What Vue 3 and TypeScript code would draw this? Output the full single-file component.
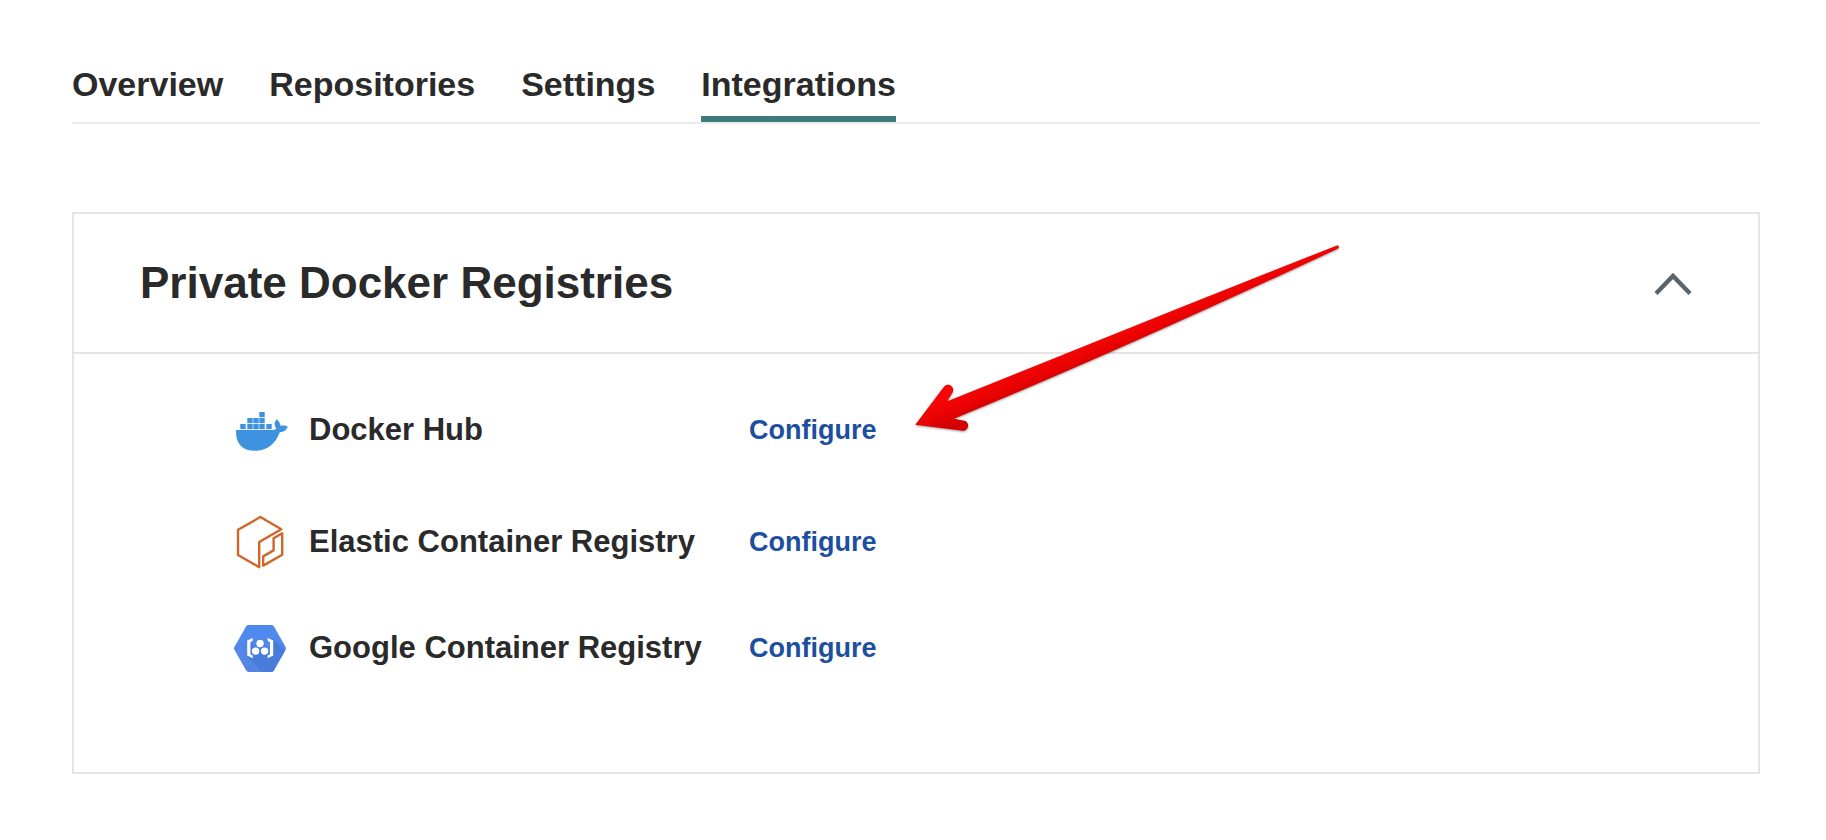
<script setup lang="ts">
import { ref } from 'vue'

const tabs: string[] = ['Overview', 'Repositories', 'Settings', 'Integrations']
const activeTab = ref('Integrations')
const open = ref(true)
const squares: [number, number][] = [
  [15, 24], [22, 24], [28, 24], [34, 24], [41, 24],
  [22, 18], [28, 18], [34, 18], [34, 12],
]
</script>

<template>
  <main class="page">
    <nav class="tabs" aria-label="Sections">
      <a
        v-for="tab in tabs"
        :key="tab"
        href="#"
        class="tab"
        :class="{ active: tab === activeTab }"
        @click.prevent="activeTab = tab"
      >{{ tab }}</a>
    </nav>

    <section class="card">
      <header class="card-header">
        <h2 id="registries-title">Private Docker Registries</h2>
        <button
          type="button"
          class="toggle"
          aria-labelledby="registries-title"
          :aria-expanded="open"
          @click="open = !open"
        >
          <svg width="38" height="26" viewBox="0 0 38 26">
            <path d="M2 23.500 19 6 36 23.500" fill="none" stroke="#5b636b" stroke-width="4.400" />
          </svg>
        </button>
      </header>

      <ul v-show="open" class="registries">
        <li class="row">
          <svg width="56" height="60" viewBox="7 0 56 60" aria-hidden="true">
            <g fill="#3e92e0">
              <rect v-for="([x, y], i) in squares" :key="i" :x="x + 0.3" :y="y" width="5.4" height="5.2" />
              <path d="M11.2 30H46.5C48.6 30 50.3 29.5 51.4 28.7 49.2 25.6 49 22.2 51.6 19.2 53.7 20.9 55.2 23 55.6 25.9 58 25.3 60.8 25.6 62.8 26.8 61.4 30.4 58.9 32.1 54.8 32.2 50.2 44 42.2 50.8 30.2 50.8 17.3 50.8 10.2 43.6 11.2 30Z" />
            </g>
          </svg>
          <span class="name">Docker Hub</span>
          <a href="#" class="configure" @click.prevent>Configure</a>
        </li>
        <li class="row">
          <svg width="56" height="60" viewBox="7 7 56 60" aria-hidden="true">
            <g fill="none" stroke="#cf672b" stroke-width="2.4" stroke-linejoin="round">
              <path d="M35.4 12 13 24.8V50L34.2 62.2V37L56.3 24.2Z" />
              <path d="M57.2 28.2V49.8L38.2 60.6V51.4L48.6 45.4V33.2Z" />
            </g>
          </svg>
          <span class="name">Elastic Container Registry</span>
          <a href="#" class="configure" @click.prevent>Configure</a>
        </li>
        <li class="row">
          <svg width="56" height="48" viewBox="7 14 56 48" aria-hidden="true">
            <defs>
              <linearGradient id="hex-blue" x1="0" y1="0" x2="0" y2="1">
                <stop offset="0" stop-color="#4f8af0" />
                <stop offset="1" stop-color="#5684e2" />
              </linearGradient>
              <clipPath id="hex-clip">
                <path d="M23.5 15H46.5Q48 15 48.8 16.3L60.6 36.9Q61.3 38.3 60.6 39.7L48.8 60.5Q48 61.9 46.5 61.9H23.5Q22 61.9 21.2 60.5L9.4 39.7Q8.7 38.3 9.4 36.9L21.2 16.3Q22 15 23.5 15Z" />
              </clipPath>
            </defs>
            <g clip-path="url(#hex-clip)">
              <path d="M8 14H62V63H8Z" fill="url(#hex-blue)" />
              <path d="M22.5 47.2 37.5 62.2H52L63 43.5 47 28 46 46 36.5 28.5 32 31.5 36 38 29 40 28 33 22.5 40Z" fill="#497bda" />
            </g>
            <g fill="#fff">
              <path d="M27.8 28V30.6L25.4 32.2V44.300L27.8 45.600V48.200L22.2 45.600V30.6Z" />
              <path d="M42.600 28V30.6L45 32.2V44.300L42.600 45.600V48.200L48.200 45.600V30.6Z" />
              <circle cx="35.1" cy="33.5" r="3.7" />
              <circle cx="30.6" cy="41.1" r="3.7" />
              <circle cx="39.6" cy="41.1" r="3.7" />
            </g>
          </svg>
          <span class="name">Google Container Registry</span>
          <a href="#" class="configure" @click.prevent>Configure</a>
        </li>
      </ul>

      <svg class="arrow" width="460" height="220" viewBox="0 0 460 220" aria-hidden="true">
        <defs>
          <linearGradient id="arrow-red" gradientUnits="userSpaceOnUse" x1="120" y1="140" x2="129" y2="162">
            <stop offset="0" stop-color="#f60505" />
            <stop offset="0.5" stop-color="#ea0202" />
            <stop offset="1" stop-color="#d20000" />
          </linearGradient>
        </defs>
        <path
          class="arrow-shape"
          d="M15.3 194.8 43.8 157C48 151.8 55.5 157 52.5 162.5L47.3 171.2 166.7 123.3 276.7 79 437 15.4Q438.6 15.2 438.900 16.8 438.900 18.3 437.6 18.8Q210 125 54 188.7L64.500 190.8C70.500 192.6 68.500 201 62.8 200.8Z"
          fill="url(#arrow-red)"
        />
      </svg>
    </section>
  </main>
</template>

<style>
body {
  margin: 0;
  background: #fff;
}
</style>

<style scoped>
.page {
  box-sizing: border-box;
  padding: 64px 66px 66px 72px;
  font-family: "Liberation Sans", Arial, Helvetica, sans-serif;
  font-weight: 700;
  color: #2a2a2a;
}

.tabs {
  display: flex;
  gap: 46px;
  border-bottom: 2px solid #ebebeb;
}

.tab {
  padding-bottom: 12px;
  border-bottom: 6px solid transparent;
  font-size: 34px;
  line-height: 40px;
  color: inherit;
  text-decoration: none;
}

.tab.active {
  border-bottom-color: #3f7b7a;
}

.card {
  position: relative;
  margin-top: 88px;
  border: 2px solid #e4e4e4;
}

.card-header {
  display: flex;
  align-items: center;
  justify-content: space-between;
  padding: 44px 66px;
  border-bottom: 2px solid #e4e4e4;
}

h2 {
  margin: 0;
  font-size: 44px;
  line-height: 50px;
}

.toggle {
  display: flex;
  padding: 0;
  border: 0;
  background: none;
  cursor: pointer;
}

.registries {
  display: flex;
  flex-direction: column;
  gap: 52px;
  margin: 0;
  padding: 46px 40px 100px 158px;
  list-style: none;
}

.row {
  display: grid;
  grid-template-columns: 56px 419px auto;
  column-gap: 21px;
  align-items: center;
  justify-content: start;
}

.row svg {
  display: block;
}

.name {
  font-size: 31px;
  line-height: 36px;
}

.configure {
  font-size: 27px;
  line-height: 32px;
  color: #1d4f9f;
  text-decoration: none;
}

.arrow {
  position: absolute;
  left: 826px;
  top: 16px;
  pointer-events: none;
}

.arrow-shape {
  filter: drop-shadow(0 1px 1px rgba(0, 0, 0, 0.4));
}
</style>
